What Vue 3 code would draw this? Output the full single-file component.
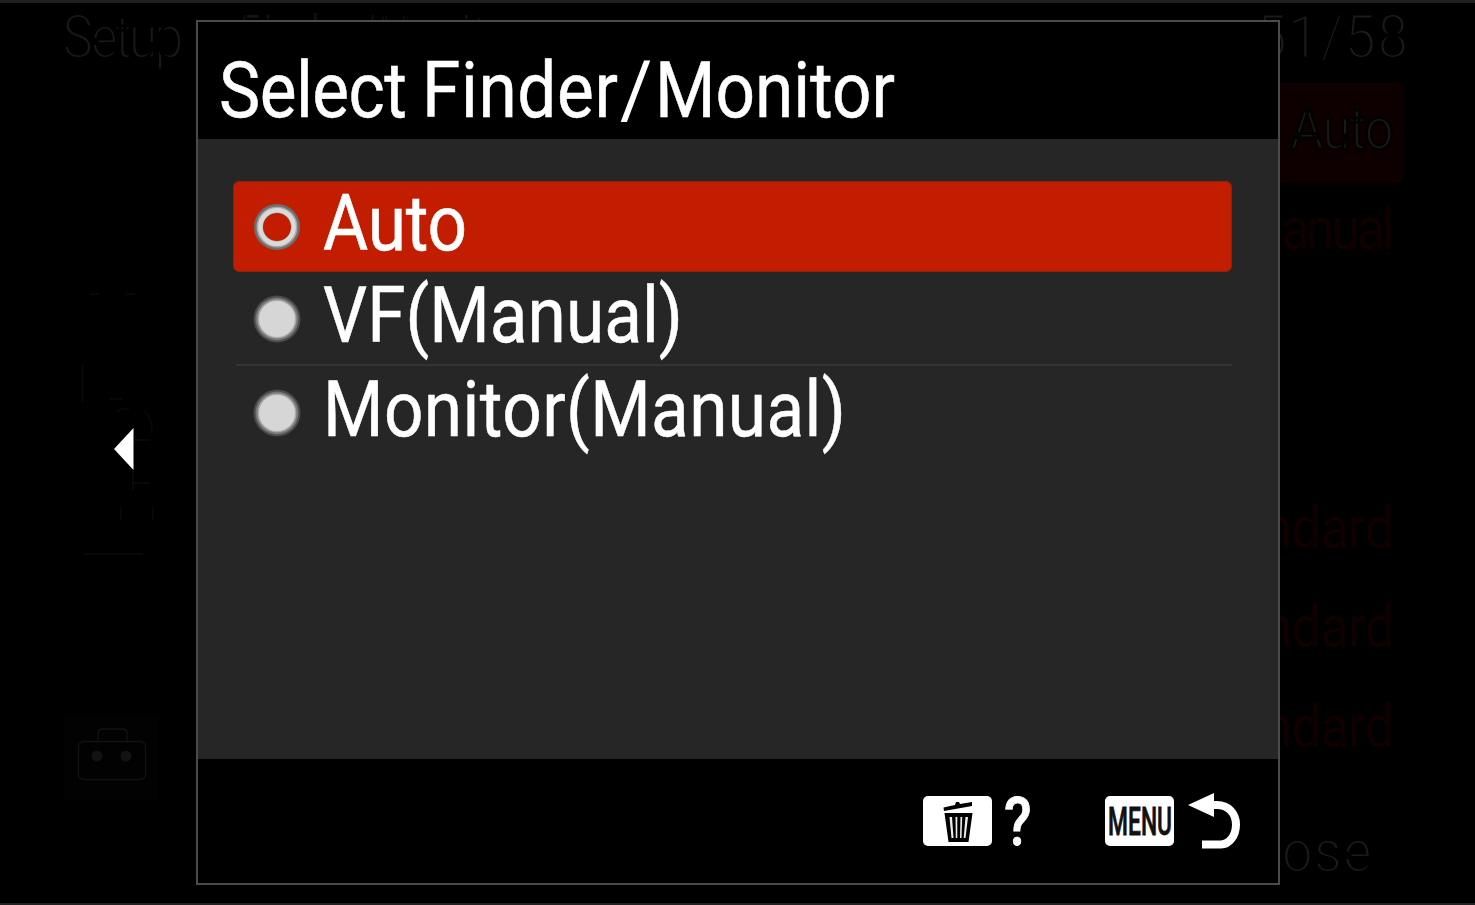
<script setup>
import { h } from 'vue'

// Condensed camera-menu lettering: box height equals the cap height, width equals the drawn width.
const FitText = (p) =>
  h('svg', { width: p.w, height: p.cap, overflow: 'visible', style: { display: 'block', flex: 'none' } }, [
    h(
      'text',
      {
        transform: `translate(${p.dx || 0} ${p.cap}) scale(${p.sx || 0.88} 1)`,
        textLength: p.w / (p.sx || 0.88),
        lengthAdjust: 'spacing',
        'font-size': p.cap / 0.711,
        'font-family': 'Roboto, "Liberation Sans", sans-serif',
        'font-weight': p.weight || 400,
        fill: p.fill || '#fff',
        stroke: p.stroke || 'none',
        'stroke-width': p.sw || 0
      },
      p.text
    )
  ])
FitText.props = ['text', 'w', 'cap', 'dx', 'sx', 'weight', 'fill', 'stroke', 'sw']

const options = [
  { text: 'Auto', w: 144, dx: 0, selected: true },
  { text: 'VF(Manual)', w: 360, dx: 0 },
  { text: 'Monitor(Manual)', w: 523, dx: 0 }
]
const rows = [
  { text: 'Auto', w: 104, active: true },
  { text: 'Manual', w: 155 },
  null,
  null,
  { text: 'Standard', w: 205 },
  { text: 'Standard', w: 205 },
  { text: 'Standard', w: 205 }
]
</script>

<template>
  <div class="screen">
    <div class="backdrop">
      <header class="back-head">
        <div class="back-title">
          <FitText text="Setup" :w="122" :cap="43" fill="#191919" stroke="#000" :sw="3.2" />
          <FitText text="Finder/Monitor" :w="285" :cap="43" :sx="0.6" fill="#161616" stroke="#000" :sw="2" />
        </div>
        <FitText text="51/58" :w="154" :cap="43" :sx="0.95" fill="#1b1b1b" stroke="#000" :sw="3.2" />
      </header>
      <div class="back-main">
        <nav class="rail">
          <svg class="rail-lines" width="92" height="270" viewBox="0 0 92 270" fill="none" stroke="#080808" stroke-width="2">
            <path d="M26 4h9M62 4h9M18.500 75v37M46 109h12M53 122q4-4 12-3M80 121q8 6 8 20M70 150h16M69 180v20M70 193h16M57 217v13M89 217v13M19 264h60" />
          </svg>
          <svg class="toolbox" width="94" height="84" viewBox="0 0 94 84">
            <rect width="94" height="84" fill="#030202" />
            <path d="M34 24v-7q0-5 5-5h19q5 0 5 5v7" fill="none" stroke="#131313" stroke-width="1.3" />
            <rect x="14.500" y="24.500" width="67" height="38" rx="5" fill="none" stroke="#131313" stroke-width="1.3" />
            <circle cx="33" cy="39" r="5.500" fill="#121212" />
            <circle cx="62" cy="39" r="5.500" fill="#121212" />
          </svg>
        </nav>
        <div class="values">
          <div v-for="(r, i) in rows" :key="i" class="value" :class="{ active: r && r.active }">
            <FitText
              v-if="r"
              :text="r.text"
              :w="r.w"
              :cap="42"
              :fill="r.active ? '#191919' : '#120000'"
              :stroke="r.active ? '#040101' : '#000'"
              :sw="r.active ? 3 : 0.5"
            />
          </div>
        </div>
      </div>
      <footer class="back-foot">
        <FitText text="Close" :w="141" :cap="43" :sx="0.93" fill="#1b1b1b" stroke="#000" :sw="3.2" />
      </footer>
    </div>

    <svg class="prev" width="20" height="42" viewBox="0 0 20 42"><path d="M0 21 19.500 0v42z" fill="#fff" /></svg>

    <section class="dialog">
      <header class="head">
        <FitText class="word" text="Select" :w="188" :cap="56" :dx="-1" stroke="#fff" :sw="0.5" />
        <FitText text="Finder" :w="196" :cap="56" stroke="#fff" :sw="0.5" />
        <FitText class="slash" text="/" :w="32" :cap="56" :sx="1" />
        <FitText text="Monitor" :w="240" :cap="56" stroke="#fff" :sw="0.5" />
      </header>
      <div class="body">
        <div v-for="o in options" :key="o.text" class="option" :class="{ selected: o.selected }">
          <svg class="radio" width="50" height="50" viewBox="0 0 50 50">
            <template v-if="o.selected">
              <circle cx="25" cy="25" r="18.500" fill="none" stroke="#6e6e6e" stroke-width="9" />
              <circle cx="25" cy="25" r="17.300" fill="none" stroke="#a8a8a8" stroke-width="6.500" />
              <circle cx="25" cy="25" r="16.700" fill="none" stroke="#dadada" stroke-width="4.500" />
            </template>
            <template v-else>
              <circle cx="25" cy="25" r="23.500" fill="#4b4b4b" />
              <circle cx="25" cy="25" r="21.500" fill="#777" />
              <circle cx="25" cy="25" r="19.500" fill="#aaa" />
              <circle cx="25" cy="25" r="18" fill="#d6d6d6" />
            </template>
          </svg>
          <span class="label"><FitText :text="o.text" :w="o.w" :cap="56" :dx="o.dx" stroke="#fff" :sw="0.5" /></span>
        </div>
      </div>
      <footer class="foot">
        <span class="key">
          <svg width="30" height="42" viewBox="0 0 30 42">
            <path d="M.5 7.500 12 5l1-3h3l1 2 12-2v4L1 11z" fill="#000" />
            <path d="M1.500 13h28l-4 29H5.500z" fill="#000" />
            <path d="M6.500 17h2.500l1.500 21H8.500zM12.500 17h1.800v21h-1.500zM17.500 17h1.700l-.7 21H17zM22.500 17H25l-2.500 21h-1.800z" fill="#eee" />
          </svg>
        </span>
        <span class="help"><FitText text="?" :w="26" :cap="47" :sx="0.86" :weight="500" :dx="-1" stroke="#fff" :sw="0.8" /></span>
        <span class="key"><FitText text="MENU" :w="64" :cap="27" :sx="0.6" :weight="500" fill="#111" stroke="#111" :sw="0.8" /></span>
        <svg class="back" width="53" height="58" viewBox="0 0 53 58">
          <path d="M0 13 26 1v24z" fill="#fff" />
          <path d="M25 13h4c11 0 19 8 19 19.500S41 52.500 33 52.500H14" fill="none" stroke="#fff" stroke-width="8" />
        </svg>
      </footer>
    </section>
  </div>
</template>

<style>
body { margin: 0; background: #000; }
</style>

<style scoped>
.screen {
  position: relative;
  box-sizing: border-box;
  width: 1475px;
  height: 905px;
  overflow: hidden;
  background: #000;
  border-top: 3px solid #1f1f1f;
  border-bottom: 2px solid #222;
}
.backdrop { display: flex; flex-direction: column; height: 900px; }
.back-head { box-sizing: border-box; display: flex; justify-content: space-between; height: 68px; padding: 12px 66px 0 62px; }
.back-title { display: flex; gap: 56px; }
.back-main { display: flex; justify-content: space-between; height: 710px; }
.rail { display: flex; flex-direction: column; padding: 219px 0 0 64px; }
.rail-lines { flex: none; }
.toolbox { flex: none; margin-top: 157px; }
.values { display: flex; flex-direction: column; width: 320px; margin: 12px 72px 0 0; }
.value {
  box-sizing: border-box;
  display: flex;
  align-items: center;
  justify-content: flex-end;
  flex: none;
  height: 99.6px;
  padding: 0 9px 9px 0;
}
.value.active { background: #0e0000; border-radius: 7px; }
.back-foot { display: flex; justify-content: flex-end; padding: 48px 103px 0 0; }
.prev { position: absolute; left: 114px; top: 425px; }
.dialog {
  position: absolute;
  left: 196px;
  top: 17px;
  box-sizing: border-box;
  width: 1084px;
  height: 865px;
  display: flex;
  flex-direction: column;
  background: #000;
  border: 2px solid #4b4b4b;
}
.head { box-sizing: border-box; display: flex; height: 117px; padding: 39px 0 0 22px; }
.word { margin-right: 14px; }
.slash { margin: 0 3px 0 2px; }
.body { box-sizing: border-box; height: 620px; padding: 42px 46px 0 35px; background: #262626; }
.option {
  position: relative;
  box-sizing: border-box;
  display: flex;
  align-items: center;
  height: 94px;
  padding: 0 0 0 19px;
}
.option.selected { height: 91px; }
.option.selected::before {
  content: "";
  position: absolute;
  inset: 0;
  border: 1px solid #8b2408;
  border-radius: 6px;
  background: #c31d00;
  box-sizing: border-box;
}
.option > * { position: relative; }
.option > .radio { flex: none; margin-right: 21px; }
.label { padding-bottom: 10px; }
.option:nth-child(2)::after {
  content: "";
  position: absolute;
  left: 3px;
  right: 0;
  bottom: 0;
  height: 2px;
  background: #343434;
}
.foot { display: flex; flex: 1; align-items: center; justify-content: flex-end; padding-right: 37px; }
.key {
  display: flex;
  align-items: center;
  justify-content: center;
  width: 69px;
  height: 50px;
  border-radius: 5px;
  background: #fff;
}
.help { margin: 0 74px 0 13px; }
.back { margin-left: 14px; }
</style>
